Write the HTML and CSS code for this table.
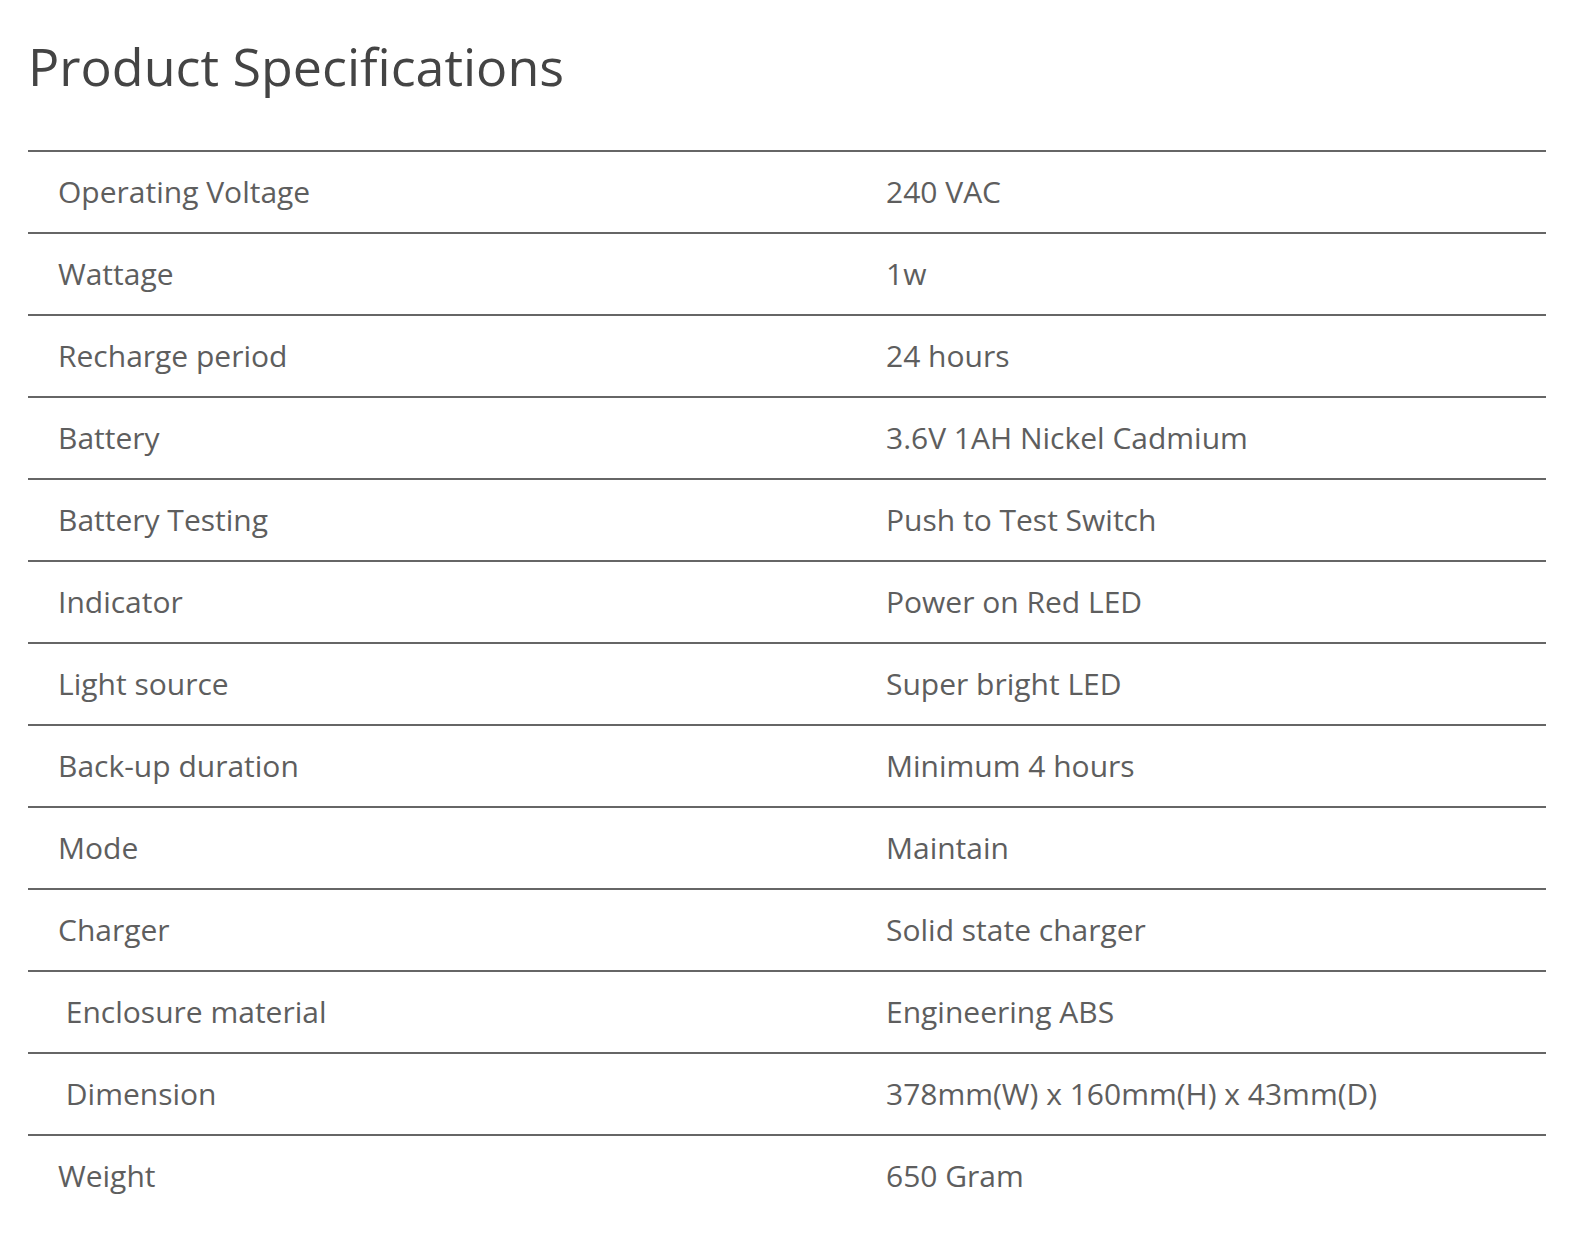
FILE: index.html
```html
<!DOCTYPE html>
<html>
<head>
<meta charset="utf-8">
<link rel="stylesheet" href="styles.css">
</head>
<body>
<div class="specs">
  <h1 class="specs-title">Product Specifications</h1>
  <table class="spec-table">
    <tbody>
      <tr><td class="label">Operating Voltage</td><td class="value">240 VAC</td></tr>
      <tr><td class="label">Wattage</td><td class="value">1w</td></tr>
      <tr><td class="label">Recharge period</td><td class="value">24 hours</td></tr>
      <tr><td class="label">Battery</td><td class="value">3.6V 1AH Nickel Cadmium</td></tr>
      <tr><td class="label">Battery Testing</td><td class="value">Push to Test Switch</td></tr>
      <tr><td class="label">Indicator</td><td class="value">Power on Red LED</td></tr>
      <tr><td class="label">Light source</td><td class="value">Super bright LED</td></tr>
      <tr><td class="label">Back-up duration</td><td class="value">Minimum 4 hours</td></tr>
      <tr><td class="label">Mode</td><td class="value">Maintain</td></tr>
      <tr><td class="label">Charger</td><td class="value">Solid state charger</td></tr>
      <tr><td class="label">&nbsp;Enclosure material</td><td class="value">Engineering ABS</td></tr>
      <tr><td class="label">&nbsp;Dimension</td><td class="value">378mm(W) x 160mm(H) x 43mm(D)</td></tr>
      <tr><td class="label">Weight</td><td class="value">650 Gram</td></tr>
    </tbody>
  </table>
</div>
</body>
</html>
```
FILE: styles.css
```css
html, body {
  margin: 0;
  padding: 0;
  background: #ffffff;
}

body {
  font-family: "Open Sans", "Liberation Sans", sans-serif;
}

.specs {
  padding: 0 42px 0 28px;
}

.specs-title {
  margin: 0;
  padding-top: 30px;
  height: 150px;
  box-sizing: border-box;
  font-size: 52px;
  font-weight: 400;
  line-height: 72px;
  color: #444444;
}

.spec-table {
  width: 100%;
  border-collapse: collapse;
  font-size: 30px;
  color: #5e5e5e;
}

.spec-table tr {
  border-top: 2px solid #666666;
}

.spec-table td {
  height: 80px;
  padding: 0 30px;
  vertical-align: middle;
  line-height: 40px;
}

.spec-table td.label {
  width: 768px;
}
```
